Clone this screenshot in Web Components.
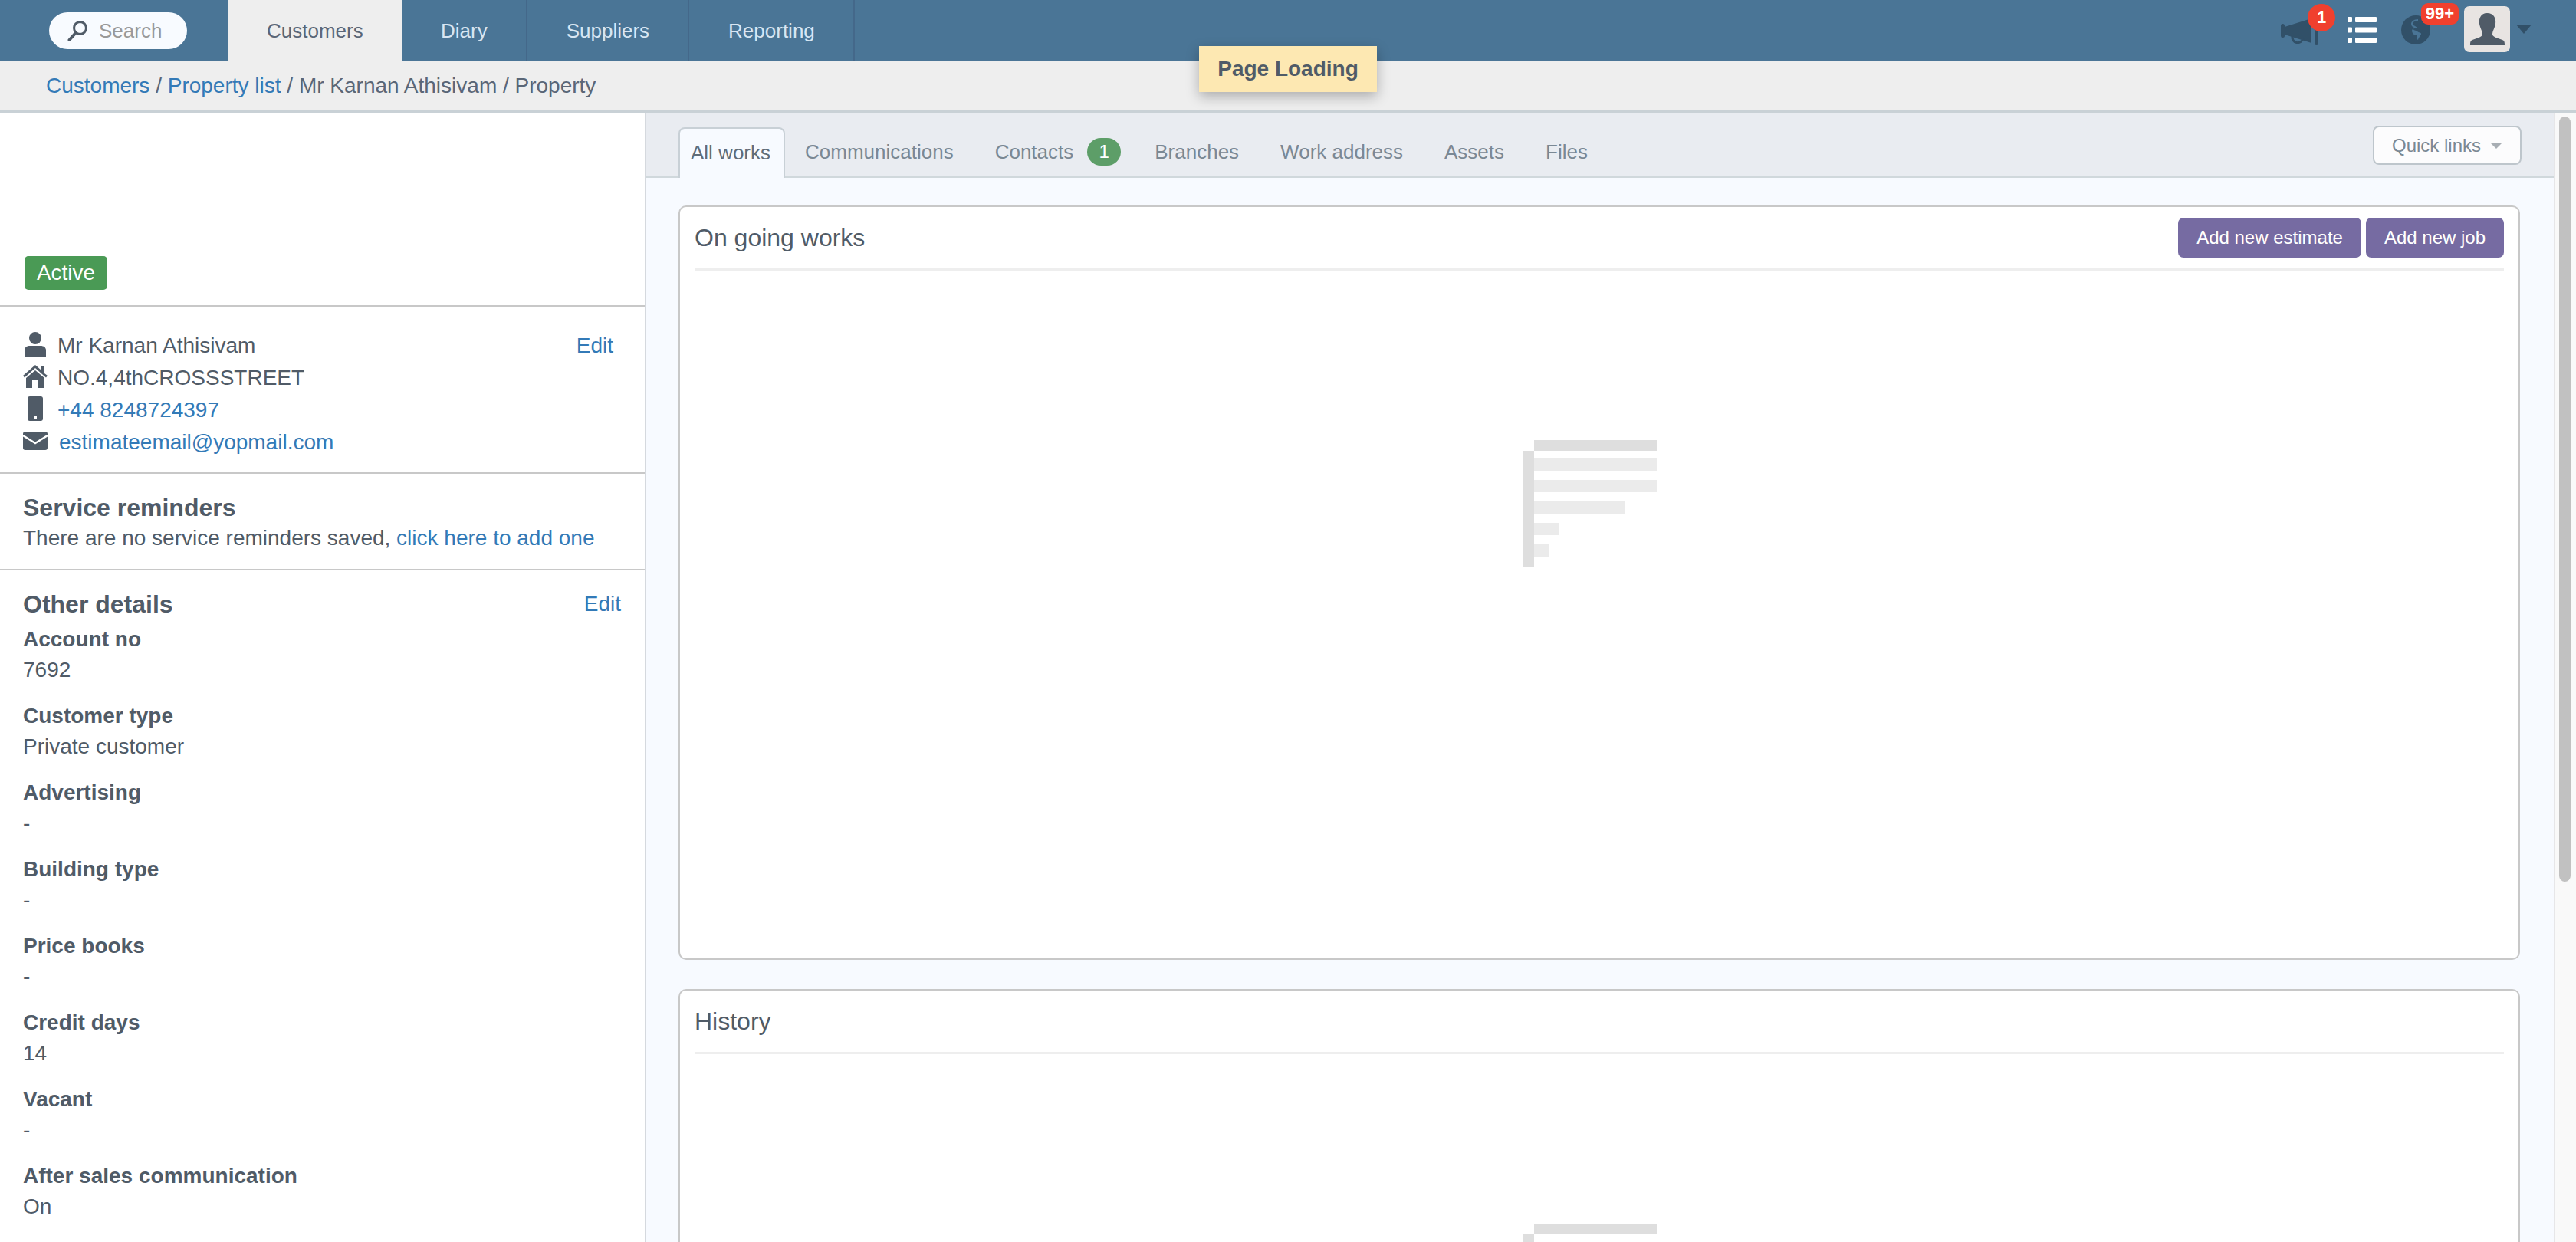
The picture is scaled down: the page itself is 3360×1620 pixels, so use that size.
<!DOCTYPE html>
<html lang="en">
<head>
<meta charset="utf-8">
<title>Property</title>
<style>
  html, body { margin: 0; padding: 0; height: 100%; overflow: hidden; }
  body { font-family: "Liberation Sans", Arial, sans-serif; font-size: 26px; color: #505b67; background: #fff; }
</style>
</head>
<body>
<app-shell></app-shell>

<script>
const ICONS = {
  search: `<svg width="28" height="28" viewBox="0 0 28 28"><circle cx="17.5" cy="10.5" r="8" fill="none" stroke="#505b67" stroke-width="3"/><path d="M12 16.5 3.5 26" stroke="#505b67" stroke-width="4" stroke-linecap="round"/></svg>`,
  person: `<svg width="28" height="32" viewBox="0 0 28 32" fill="#505b67"><ellipse cx="14" cy="8" rx="8" ry="8"/><path d="M0 32V24c0-4 3-6 7-6h14c4 0 7 2 7 6v8z"/></svg>`,
  house: `<svg width="32" height="30" viewBox="0 0 32 30" fill="#505b67"><path d="M0 14 16 0l8 7V2h4v9l4 3-2 2.5L16 4 2 16.5z"/><path d="M4 17 16 7l12 10v13h-8V20h-8v10H4z"/></svg>`,
  phone: `<svg width="20" height="32" viewBox="0 0 20 32"><rect width="20" height="32" rx="3" fill="#505b67"/><rect x="8" y="25" width="4" height="4" fill="#fff"/></svg>`,
  mail: `<svg width="32" height="24" viewBox="0 0 32 24"><rect width="32" height="24" rx="3" fill="#505b67"/><path d="M0 5 16 15 32 5" fill="none" stroke="#fff" stroke-width="2.4"/></svg>`,
  megaphone: `<svg width="50" height="36" viewBox="0 0 50 36" fill="#315068"><rect x="0" y="8" width="5" height="18" rx="2.5"/><path d="M5 12 40 1v32L5 22z"/><rect x="44" y="0" width="5" height="36" rx="2.5"/><path d="M15 24a7 7 0 1 0 14 3" fill="none" stroke="#315068" stroke-width="3"/></svg>`,
  list: `<svg width="38" height="34" viewBox="0 0 38 34" fill="#fff"><rect width="6" height="7" rx="1"/><rect x="10" width="28" height="7" rx="1"/><rect y="13.5" width="6" height="7" rx="1"/><rect x="10" y="13.5" width="28" height="7" rx="1"/><rect y="27" width="6" height="7" rx="1"/><rect x="10" y="27" width="28" height="7" rx="1"/></svg>`,
  globe: `<svg width="38" height="38" viewBox="0 0 38 38"><circle cx="19" cy="19" r="19" fill="#315068"/><path d="M22 7c-4 0-7 2-7 4s4 3 6 5c-2 1-5 0-5 2s3 1 5 3 5 1 5 3-3 4-4 8c-2-1-2-4-2-6-3 0-6-3-6-6 0-2 2-3 3-4-2-1-4-2-4-5s4-6 9-6z" fill="#4a7596"/></svg>`,
  avatar: `<svg width="60" height="60" viewBox="0 0 60 60"><rect width="60" height="60" rx="7" fill="#e8e4e2"/><path d="M30 9c9 0 12 7 11 14-1 6-4 9-4 14 0 3 8 5 13 7 3 1 3 4 3 7H8c0-3 0-6 3-7 5-2 13-4 13-7 0-5-3-8-4-14-1-7 2-14 10-14z" fill="#505b67"/></svg>`
};

class TopNav extends HTMLElement {
  constructor() {
    super();
    this.attachShadow({ mode: 'open' });
    this.shadowRoot.innerHTML = `
      <style>
        :host { display: flex; height: 80px; background: #4a7596; align-items: stretch; flex: none; }
        .search { width: 180px; height: 48px; margin: 16px 54px 0 64px; background: #f8fbff; border-radius: 24px; display: flex; align-items: center; gap: 14px; padding-left: 23px; box-sizing: border-box; color: #999; font-size: 26px; }
        .search svg { flex: none; }
        .tabs { display: flex; height: 80px; }
        .tab { padding: 0 50px 0 51px; height: 80px; line-height: 80px; color: #d8e6f3; border-right: 2px solid #44688a; }
        .tab.on { background: #eee; color: #5a6677; border-right: 0; padding: 0 50px; width: 126px; }
        .right { margin-left: auto; position: relative; width: 400px; height: 80px; }
        .right > * { position: absolute; }
        .badge { background: #f0402e; color: #fff; font-weight: bold; display: flex; align-items: center; justify-content: center; font-size: 22px; }
        .caret { width: 0; height: 0; border: 10px solid transparent; border-top: 12px solid #315068; border-bottom: 0; }
        svg { display: block; }
      </style>
      <div class="search">${ICONS.search}<span>Search</span></div>
      <div class="tabs">
        <div class="tab on">Customers</div>
        <div class="tab">Diary</div>
        <div class="tab">Suppliers</div>
        <div class="tab">Reporting</div>
      </div>
      <div class="right">
        <div style="left:15px;top:23px">${ICONS.megaphone}</div>
        <div class="badge" style="left:50px;top:5px;width:36px;height:36px;border-radius:50%">1</div>
        <div style="left:102px;top:22px">${ICONS.list}</div>
        <div style="left:172px;top:20px">${ICONS.globe}</div>
        <div class="badge" style="left:198px;top:4px;width:49px;height:28px;border-radius:9px">99+</div>
        <div style="left:254px;top:8px">${ICONS.avatar}</div>
        <div class="caret" style="left:322px;top:32px"></div>
      </div>
    `;
  }
}
customElements.define('top-nav', TopNav);

class CrumbBar extends HTMLElement {
  constructor() {
    super();
    this.attachShadow({ mode: 'open' });
    this.shadowRoot.innerHTML = `
      <style>
        :host { display: flex; flex: none; height: 64px; align-items: center; padding-left: 60px; background: #eee; border-bottom: 3px solid #c9d1d6; color: #5a6677; font-size: 28px; }
        a { color: #337ab7; text-decoration: none; }
      </style>
      <span><a>Customers</a> / <a>Property list</a> / Mr Karnan Athisivam / Property</span>
    `;
  }
}
customElements.define('crumb-bar', CrumbBar);

class LoadingToast extends HTMLElement {
  constructor() {
    super();
    this.attachShadow({ mode: 'open' });
    this.shadowRoot.innerHTML = `
      <style>
        :host { position: absolute; left: 1564px; top: 60px; width: 232px; height: 60px; background: #fde8b2; box-shadow: 0 6px 16px rgba(0,0,0,.28); display: flex; align-items: center; justify-content: center; font-weight: bold; color: #505b67; font-size: 28px; z-index: 5; }
      </style>
      <slot></slot>
    `;
  }
}
customElements.define('loading-toast', LoadingToast);

class DetailRow extends HTMLElement {
  constructor() {
    super();
    this.attachShadow({ mode: 'open' });
    const icon = ICONS[this.getAttribute('icon')];
    this.shadowRoot.innerHTML = `
      <style>
        :host { display: flex; align-items: center; height: 42px; }
        .i { width: 32px; margin-right: 13px; display: flex; justify-content: center; flex: none; position: relative; top: -2px; }
        svg { display: block; }
      </style>
      <div class="i">${icon}</div><slot></slot>
    `;
  }
}
customElements.define('detail-row', DetailRow);

class InfoField extends HTMLElement {
  constructor() {
    super();
    this.attachShadow({ mode: 'open' });
    this.shadowRoot.innerHTML = `
      <style>
        :host { display: block; margin-bottom: 20px; line-height: 40px; }
        b { display: block; }
      </style>
      <b>${this.getAttribute('label')}</b><div>${this.getAttribute('value')}</div>
    `;
  }
}
customElements.define('info-field', InfoField);

class SidePanel extends HTMLElement {
  constructor() {
    super();
    this.attachShadow({ mode: 'open' });
    this.shadowRoot.innerHTML = `
      <style>
        :host { display: block; width: 841px; flex: none; border-right: 2px solid #d5d9de; background: #fff; overflow: hidden; font-size: 28px; }
        a { color: #337ab7; text-decoration: none; }
        section { border-bottom: 2px solid #c8c8c8; padding: 0 30px; box-sizing: border-box; position: relative; }
        .status { height: 253px; padding-top: 187px; }
        .active { display: inline-flex; width: 108px; height: 44px; margin-left: 2px; align-items: center; justify-content: center; background: #4a9a55; color: #fff; border-radius: 5px; }
        .contact { height: 218px; padding-top: 30px; padding-left: 30px; }
        .contact .edit { position: absolute; right: 41px; top: 31px; line-height: 40px; }
        .reminders { height: 126px; padding-top: 22px; }
        h3 { margin: 0; font-size: 32px; line-height: 44px; }
        .reminders p { margin: 0; line-height: 40px; margin-top: -2px; }
        .other { border: 0; padding-top: 22px; }
        .other .edit { position: absolute; right: 31px; top: 22px; line-height: 44px; }
        .other h3 { margin-bottom: 4px; }
        .mail { margin-left: 2px; }
      </style>
      <section class="status"><span class="active">Active</span></section>
      <section class="contact">
        <a class="edit">Edit</a>
        <detail-row icon="person">Mr Karnan Athisivam</detail-row>
        <detail-row icon="house">NO.4,4thCROSSSTREET</detail-row>
        <detail-row icon="phone"><a>+44 8248724397</a></detail-row>
        <detail-row icon="mail"><a class="mail">estimateemail@yopmail.com</a></detail-row>
      </section>
      <section class="reminders">
        <h3>Service reminders</h3>
        <p>There are no service reminders saved, <a>click here to add one</a></p>
      </section>
      <section class="other">
        <a class="edit">Edit</a>
        <h3>Other details</h3>
        <info-field label="Account no" value="7692"></info-field>
        <info-field label="Customer type" value="Private customer"></info-field>
        <info-field label="Advertising" value="-"></info-field>
        <info-field label="Building type" value="-"></info-field>
        <info-field label="Price books" value="-"></info-field>
        <info-field label="Credit days" value="14"></info-field>
        <info-field label="Vacant" value="-"></info-field>
        <info-field label="After sales communication" value="On"></info-field>
      </section>
    `;
  }
}
customElements.define('side-panel', SidePanel);

class TabBar extends HTMLElement {
  constructor() {
    super();
    this.attachShadow({ mode: 'open' });
    this.shadowRoot.innerHTML = `
      <style>
        :host { display: flex; flex: none; height: 85px; box-sizing: border-box; padding: 19px 42px 0; background: #e9ecf1; border-bottom: 3px solid #d0d8dc; color: #7a8894; }
        .tab { padding: 0 27px 2px; height: 66px; box-sizing: border-box; white-space: nowrap; display: flex; align-items: center; }
        .tab.on { padding: 0 17px 2px 14px; margin-right: -1px; background: #f7faff; color: #5f6c78; border: 2px solid #c8d0d6; border-bottom: 0; border-radius: 8px 8px 0 0; }
        .count { width: 44px; height: 36px; border-radius: 18px; background: #5d9e68; color: #fff; font-size: 24px; display: flex; align-items: center; justify-content: center; margin-left: 18px; margin-right: -10px; }
        .quick { margin-left: auto; align-self: flex-start; width: 194px; height: 51px; margin-top: -2px; box-sizing: border-box; background: #fcfcfd; border: 2px solid #bec6cc; border-radius: 8px; font-size: 24px; display: flex; align-items: center; justify-content: center; gap: 12px; color: #7a8894; }
        .quick i { width: 0; height: 0; border: 8px solid transparent; border-top: 8px solid #a8aeb4; border-bottom: 0; }
      </style>
      <div class="tab on">All works</div>
      <div class="tab">Communications</div>
      <div class="tab">Contacts<span class="count">1</span></div>
      <div class="tab">Branches</div>
      <div class="tab">Work address</div>
      <div class="tab">Assets</div>
      <div class="tab">Files</div>
      <div class="quick">Quick links<i></i></div>
    `;
  }
}
customElements.define('tab-bar', TabBar);

class EmptyChart extends HTMLElement {
  constructor() {
    super();
    this.attachShadow({ mode: 'open' });
    this.shadowRoot.innerHTML = `
      <style>
        :host { display: grid; grid-template-columns: 14px 160px; grid-template-rows: 14px 152px; width: 174px; }
        .top { grid-column: 2; background: #dedede; }
        .side { background: #dedede; }
        .lines { display: flex; flex-direction: column; gap: 12px; padding-top: 10px; }
        .lines div { height: 16px; background: #ebebeb; }
      </style>
      <div class="top"></div>
      <div class="side"></div>
      <div class="lines">
        <div style="width:160px"></div>
        <div style="width:160px"></div>
        <div style="width:119px"></div>
        <div style="width:32px"></div>
        <div style="width:20px"></div>
      </div>
    `;
  }
}
customElements.define('empty-chart', EmptyChart);

class WorkCard extends HTMLElement {
  constructor() {
    super();
    this.attachShadow({ mode: 'open' });
    this.shadowRoot.innerHTML = `
      <style>
        :host { display: block; flex: none; box-sizing: border-box; height: 984px; background: #fff; border: 2px solid #c8c8c8; border-radius: 10px; padding: 0 19px; }
        .head { height: 80px; display: flex; align-items: center; justify-content: space-between; border-bottom: 3px solid #eee; font-size: 32px; color: #505b67; }
        .actions { display: flex; gap: 6px; font-size: 24px; }
        .body { display: flex; justify-content: center; padding-top: 221px; padding-right: 24px; }
      </style>
      <div class="head"><span>${this.getAttribute('heading')}</span><div class="actions"><slot name="actions"></slot></div></div>
      <div class="body"><empty-chart></empty-chart></div>
    `;
  }
}
customElements.define('work-card', WorkCard);

class PurpleButton extends HTMLElement {
  constructor() {
    super();
    this.attachShadow({ mode: 'open' });
    this.shadowRoot.innerHTML = `
      <style>
        :host { display: flex; align-items: center; justify-content: center; height: 52px; background: #766ba2; color: #fff; border-radius: 7px; font-size: 24px; padding: 0 24px; }
      </style>
      <slot></slot>
    `;
  }
}
customElements.define('purple-button', PurpleButton);

class FakeScrollbar extends HTMLElement {
  constructor() {
    super();
    this.attachShadow({ mode: 'open' });
    this.shadowRoot.innerHTML = `
      <style>
        :host { display: block; width: 29px; flex: none; box-sizing: border-box; border-left: 2px solid #e6e6e8; background: #f9f9f9; padding: 5px 0 0 5px; }
        div { width: 15px; height: 998px; border-radius: 8px; background: #c1c1c1; }
      </style>
      <div></div>
    `;
  }
}
customElements.define('fake-scrollbar', FakeScrollbar);

class AppShell extends HTMLElement {
  constructor() {
    super();
    this.attachShadow({ mode: 'open' });
    this.shadowRoot.innerHTML = `
      <style>
        :host { display: flex; flex-direction: column; height: 1620px; width: 3360px; overflow: hidden; position: relative; }
        .page { display: flex; flex: 1; min-height: 0; }
        .main { flex: 1; min-width: 0; display: flex; flex-direction: column; background: #f7faff; overflow: hidden; }
        .cards { display: flex; flex-direction: column; gap: 38px; padding: 36px 44px 0 42px; }
      </style>
      <top-nav></top-nav>
      <crumb-bar></crumb-bar>
      <loading-toast>Page Loading</loading-toast>
      <div class="page">
        <side-panel></side-panel>
        <div class="main">
          <tab-bar></tab-bar>
          <div class="cards">
            <work-card heading="On going works">
              <purple-button slot="actions">Add new estimate</purple-button>
              <purple-button slot="actions">Add new job</purple-button>
            </work-card>
            <work-card heading="History"></work-card>
          </div>
        </div>
        <fake-scrollbar></fake-scrollbar>
      </div>
    `;
  }
}
customElements.define('app-shell', AppShell);
</script>
</body>
</html>
